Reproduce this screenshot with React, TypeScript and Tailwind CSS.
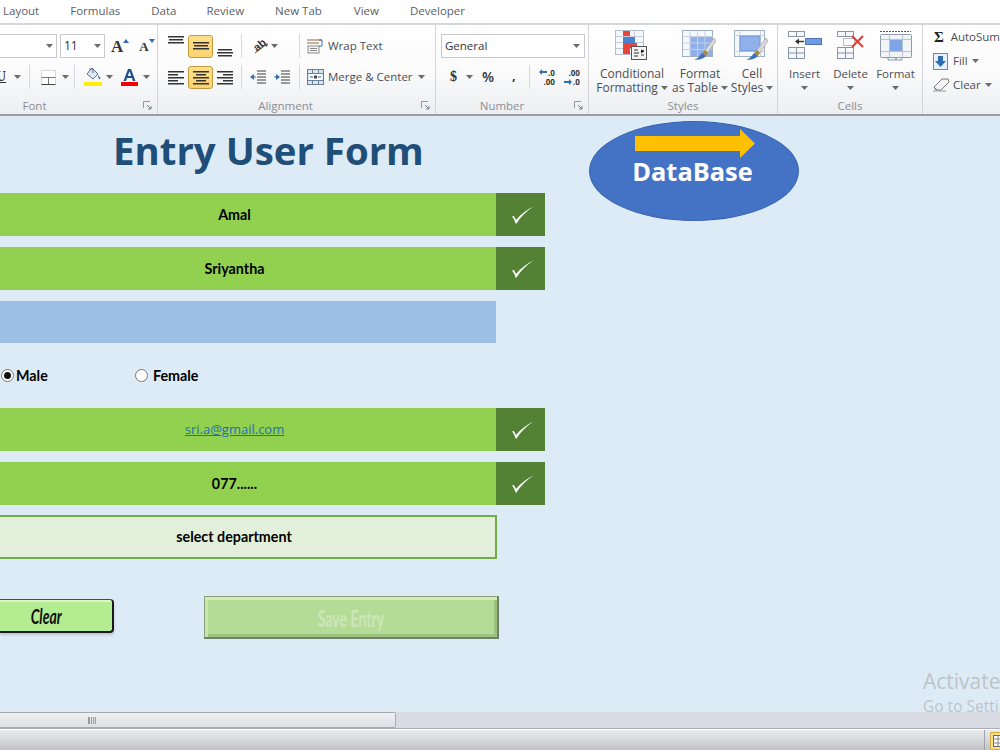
import React from 'react';

const Caret = ({ className = '' }: { className?: string }) => (
  <svg width="7" height="4" viewBox="0 0 7 4" className={className}>
    <path d="M0 0h7L3.5 4z" fill="#6b6b6b" />
  </svg>
);

const Divider = ({ className = '' }: { className?: string }) => (
  <div className={`w-px h-[24px] bg-[#d8dade] ${className}`} />
);

// horizontal lines for the alignment buttons
const Lines = ({ rows, w = 16 }: { rows: [number, number][]; w?: number }) => (
  <svg width={w} height="16" viewBox={`0 0 ${w} 16`}>
    {rows.map(([y, len], i) => {
      const x = (w - len) / 2;
      return <rect key={i} x={x} y={y} width={len} height="1.5" fill="#333" />;
    })}
  </svg>
);

const LinesLeft = ({ rows }: { rows: [number, number, number][] }) => (
  <svg width="16" height="16" viewBox="0 0 16 16">
    {rows.map(([x, y, len], i) => (
      <rect key={i} x={x} y={y} width={len} height="1.5" fill="#333" />
    ))}
  </svg>
);

const Active = ({ children }: { children: React.ReactNode }) => (
  <div className="w-[25px] h-[23px] flex items-center justify-center rounded-[3px] border border-[#c49a3e] bg-gradient-to-b from-[#fde08a] to-[#fbd36f]">
    {children}
  </div>
);

const Group = ({ label, width, labelPad = '', launcher, children }: { label: string; width: string; labelPad?: string; launcher?: boolean; children: React.ReactNode }) => (
  <div className={`${width} h-full shrink-0 flex flex-col border-r border-[#d3d5d9] relative`}>
    <div className="flex-1 min-h-0">{children}</div>
    <div className={`h-[18px] pt-[2px] flex items-center justify-center text-[11.5px] text-[#8a8f96] leading-none ${labelPad}`}>{label}</div>
    {launcher && (
      <svg width="9" height="9" viewBox="0 0 9 9" className="absolute right-[5px] bottom-[4px]">
        <path d="M.5 7V.5H7" fill="none" stroke="#9a9a9a" />
        <path d="M4 4l4 4M8 5v3H5" fill="none" stroke="#6f7f90" />
      </svg>
    )}
  </div>
);

const FontGroup = () => (
  <Group label="Font" width="w-[158px]" labelPad="pr-[88px]" launcher>
    <div className="flex items-center h-[24px] mt-[9px]">
      <div className="w-[57px] h-[24px] bg-white border border-l-0 border-[#c8cacd] flex items-center justify-end pr-[3px]">
        <Caret />
      </div>
      <div className="w-[45px] h-[24px] ml-[3px] bg-white border border-[#c8cacd] flex items-center justify-between px-[3px] text-[12px] text-[#333]">
        <span>11</span>
        <Caret />
      </div>
      <span className="ml-[6px] text-[17px] font-bold text-[#333] leading-none font-['Liberation_Serif',serif]">A</span>
      <svg width="6" height="4" viewBox="0 0 6 4" className="mb-[10px]"><path d="M0 4l3-4 3 4z" fill="#2f6db5" /></svg>
      <span className="ml-[10px] text-[13px] font-bold text-[#333] leading-none font-['Liberation_Serif',serif]">A</span>
      <svg width="6" height="4" viewBox="0 0 6 4" className="mb-[10px]"><path d="M0 0l3 4 3-4z" fill="#2f6db5" /></svg>
    </div>
    <div className="flex items-center h-[24px] mt-[7px]">
      <span className="ml-[-4px] w-[10px] text-[14px] font-bold underline text-[#333] leading-none overflow-hidden font-['Liberation_Serif',serif]">U</span>
      <Caret className="ml-[8px]" />
      <Divider className="ml-[8px]" />
      <svg width="15" height="15" viewBox="0 0 15 15" className="ml-[11px]">
        <rect x=".5" y=".5" width="14" height="14" fill="#fff" stroke="#b5b5b5" strokeDasharray="1 1" />
        <path d="M.5 7.500h14M7.500 7.500v7" stroke="#777" />
        <path d="M.5 14.500h14" stroke="#444" />
      </svg>
      <Caret className="ml-[6px]" />
      <Divider className="ml-[5px]" />
      <svg width="18" height="20" viewBox="0 0 18 20" className="ml-[9px]">
        <path d="M8 1l6 6-5 5-6-5z" fill="#dfe7f2" stroke="#5a6f8c" />
        <path d="M14 8c2 2 3 3 2 4s-2-1-2-4z" fill="#4a7ebb" />
        <path d="M5 2h4v4" fill="none" stroke="#5a6f8c" />
        <rect x="0" y="15" width="18" height="4" fill="#ffee00" />
      </svg>
      <Caret className="ml-[4px]" />
      <svg width="17" height="20" viewBox="0 0 17 20" className="ml-[8px]">
        <path d="M2.500 14L7 2h3l4.500 12h-2.600l-1-3H6l-1 3zM6.800 9h3.400L8.500 4.200z" fill="#1f4e8c" />
        <rect x="0" y="15" width="17" height="4" fill="#f00000" />
      </svg>
      <Caret className="ml-[5px]" />
    </div>
  </Group>
);

const WrapIcon = () => (
  <svg width="17" height="16" viewBox="0 0 17 16">
    <path d="M0 2h15M0 5h12" stroke="#8c6a3c" strokeWidth="1.2" />
    <path d="M12 2h3v6h-3" fill="none" stroke="#3c6ea8" />
    <rect x="1" y="8" width="11" height="7" fill="#f4f4f4" stroke="#8a8a8a" />
    <path d="M3 10.500h7M3 12.500h7" stroke="#8a8a8a" />
  </svg>
);

const MergeIcon = () => (
  <svg width="17" height="16" viewBox="0 0 17 16">
    <rect x=".5" y=".5" width="16" height="15" fill="#dbe6f3" stroke="#6d7f95" />
    <path d="M.5 4.500h16M.5 11.500h16M5.500 .5v4M11.500 .5v4M5.500 11.500v4M11.500 11.500v4" stroke="#6d7f95" />
    <rect x="2" y="5" width="13" height="6" fill="#fff" />
    <path d="M3 8h3M14 8h-3" stroke="#2d5f98" strokeWidth="1.2" />
    <path d="M7 6.500h3v3H7z" fill="#444" />
  </svg>
);

const OrientIcon = () => (
  <svg width="20" height="18" viewBox="0 0 20 18">
    <text x="2" y="12" transform="rotate(-40 8 8)" fontSize="11" fontWeight="700" fill="#333" fontFamily="Liberation Sans, sans-serif">ab</text>
    <path d="M4 16L16 7" stroke="#555" />
    <path d="M17 6l-1 4-3-2z" fill="#555" />
  </svg>
);

const AlignmentGroup = () => (
  <Group label="Alignment" width="w-[278px]" labelPad="pr-[22px]" launcher>
    <div className="flex items-center h-[24px] mt-[9px] pl-[10px]">
      <div className="w-[16px] h-[23px] flex items-start pt-[1px]"><Lines rows={[[0, 16], [3, 14], [6, 16]]} /></div>
      <div className="ml-[4px]"><Active><Lines rows={[[4, 16], [7, 14], [10, 16]]} /></Active></div>
      <div className="ml-[4px] w-[16px] h-[23px] flex items-end"><Lines rows={[[7, 14], [10, 16], [13, 14]]} /></div>
      <Divider className="ml-[8px]" />
      <div className="ml-[9px]"><OrientIcon /></div>
      <Caret />
      <Divider className="ml-[21px]" />
      <div className="ml-[7px]"><WrapIcon /></div>
      <span className="ml-[4px] text-[11.5px] text-[#4b4f55] leading-none whitespace-nowrap">Wrap Text</span>
    </div>
    <div className="flex items-center h-[24px] mt-[7px] pl-[10px]">
      <div className="w-[16px]"><LinesLeft rows={[[0, 2, 16], [0, 5, 10], [0, 8, 16], [0, 11, 10], [0, 14, 16]]} /></div>
      <div className="ml-[4px]"><Active><Lines rows={[[2, 16], [5, 10], [8, 16], [11, 10], [14, 16]]} /></Active></div>
      <div className="ml-[4px] w-[16px]"><LinesLeft rows={[[0, 2, 16], [6, 5, 10], [0, 8, 16], [6, 11, 10], [0, 14, 16]]} /></div>
      <Divider className="ml-[8px]" />
      <svg width="16" height="14" viewBox="0 0 16 14" className="ml-[8px]">
        <path d="M7 1h9M7 4h9M7 7h9M7 10h9M7 13h9" stroke="#3d3d3d" />
        <path d="M0 7l4-3v6z" fill="#2f6db5" /><path d="M4 7h2" stroke="#2f6db5" />
      </svg>
      <svg width="16" height="14" viewBox="0 0 16 14" className="ml-[8px]">
        <path d="M7 1h9M7 4h9M7 7h9M7 10h9M7 13h9" stroke="#3d3d3d" />
        <path d="M6 7L2 4v6z" fill="#2f6db5" /><path d="M0 7h2" stroke="#2f6db5" />
      </svg>
      <Divider className="ml-[9px]" />
      <div className="ml-[7px]"><MergeIcon /></div>
      <span className="ml-[4px] text-[11.5px] text-[#4b4f55] leading-none whitespace-nowrap">Merge &amp; Center</span>
      <Caret className="ml-[5px]" />
    </div>
  </Group>
);

const NumberGroup = () => (
  <Group label="Number" width="w-[153px]" labelPad="pr-[20px]" launcher>
    <div className="ml-[5px] mt-[9px] w-[144px] h-[24px] bg-white border border-[#c8cacd] flex items-center justify-between pl-[3px] pr-[4px] text-[11.5px] text-[#333]">
      <span>General</span>
      <Caret />
    </div>
    <div className="flex items-center h-[24px] mt-[7px] pl-[14px] text-[#333]">
      <span className="text-[14px] font-bold leading-none font-['Liberation_Serif',serif]">$</span>
      <Caret className="ml-[9px]" />
      <span className="ml-[9px] text-[14px] font-semibold leading-none">%</span>
      <span className="ml-[18px] text-[13px] font-bold leading-none mb-[4px]">,</span>
      <Divider className="ml-[13px]" />
      <div className="ml-[9px] relative w-[16px] h-[18px] text-[8px] font-bold leading-[9px] text-right">
        <div>.0</div><div>.00</div>
        <svg width="8" height="6" viewBox="0 0 8 6" className="absolute left-0 top-[1px]"><path d="M0 3l3-3v2h5v2H3v2z" fill="#2f6db5" /></svg>
      </div>
      <div className="ml-[9px] relative w-[16px] h-[18px] text-[8px] font-bold leading-[9px] text-right">
        <div>.00</div><div>.0</div>
        <svg width="8" height="6" viewBox="0 0 8 6" className="absolute left-0 bottom-[1px]"><path d="M8 3L5 0v2H0v2h5v2z" fill="#2f6db5" /></svg>
      </div>
    </div>
  </Group>
);

const CondIcon = () => (
  <svg width="32" height="30" viewBox="0 0 32 30">
    <rect x=".5" y=".5" width="28" height="24" fill="#f5f8fc" stroke="#b4bfcc" />
    <path d="M.5 6.500h28M.5 12.500h28M.5 18.500h28M8.500 .5v24M19.500 .5v24" stroke="#c3ccd8" />
    <rect x="8" y="1" width="7" height="5" fill="#e8443a" />
    <rect x="8" y="7" width="12" height="6" fill="#4d82d0" />
    <rect x="8" y="13" width="14" height="5" fill="#e8443a" />
    <rect x="8" y="18" width="7" height="6" fill="#e8443a" />
    <rect x="16.500" y="16.500" width="15" height="13" fill="#f3f3f3" stroke="#555" />
    <path d="M19 20h4M19 23h5M19 26h4M26 20l3 1-3 2M26 25h3" stroke="#333" />
  </svg>
);

const Brush = () => (
  <g>
    <path d="M32 8L23 20l3 3 8-12z" fill="#d9d9d9" stroke="#9a9a9a" strokeWidth=".6" />
    <path d="M23 20l3 3-2 3-4-3z" fill="#a78a3f" />
    <path d="M20 23l4 3c-3 3-8 4-12 4 3-1 6-4 8-7z" fill="#3b6fc0" />
  </g>
);

const TableIcon = () => (
  <svg width="34" height="31" viewBox="0 0 34 31">
    <rect x=".5" y=".5" width="30" height="26" fill="#f5f8fc" stroke="#9fb0c5" />
    <rect x="8" y="6" width="22" height="20" fill="#8fb0ea" />
    <path d="M.5 6.500h30M.5 13h30M.5 19.500h30M8 .5v26M15.500 .5v26M23 .5v26" stroke="#c6d2e2" />
    <Brush />
  </svg>
);

const CellStyleIcon = () => (
  <svg width="34" height="31" viewBox="0 0 34 31">
    <rect x=".5" y=".5" width="30" height="26" fill="#f5f8fc" stroke="#9fb0c5" />
    <path d="M.5 5.500h30M.5 21.500h30M5.500 .5v26M26.500 .5v26" stroke="#c6d2e2" />
    <rect x="6" y="6" width="20" height="15" fill="#8fb0ea" stroke="#5b86c9" strokeWidth=".6" />
    <Brush />
  </svg>
);

const BigLabel = ({ top, bottom }: { top: string; bottom: string }) => (
  <div className="text-[12px] leading-[14px] text-[#4b4f55] text-center whitespace-nowrap mt-[6px]">
    <div>{top}</div>
    <div className="flex items-center justify-center gap-[3px]">{bottom}<Caret /></div>
  </div>
);

const StylesGroup = () => (
  <Group label="Styles" width="w-[189px]">
    <div className="flex items-start pt-[5px] pl-[5px]">
      <div className="w-[76px] flex flex-col items-center"><div className="h-[31px] mr-[3px]"><CondIcon /></div><BigLabel top="Conditional" bottom="Formatting" /></div>
      <div className="w-[60px] flex flex-col items-center"><div className="h-[31px] mr-[3px]"><TableIcon /></div><BigLabel top="Format" bottom="as Table" /></div>
      <div className="w-[44px] flex flex-col items-center"><div className="h-[31px] mr-[3px]"><CellStyleIcon /></div><BigLabel top="Cell" bottom="Styles" /></div>
    </div>
  </Group>
);

const InsertIcon = () => (
  <svg width="34" height="30" viewBox="0 0 34 30">
    <g fill="#f6f8fb" stroke="#8695a8">
      <rect x=".5" y="1.500" width="16" height="5" />
      <path d="M8.500 1.500v5" />
      <rect x=".5" y="17.500" width="16" height="11" />
      <path d="M.5 23h16M8.500 17.500v11" />
    </g>
    <rect x="17.500" y="8.500" width="16" height="6" fill="#6f9be0" stroke="#4d75b3" />
    <path d="M8 11.500h8" stroke="#333" strokeWidth="1.4" />
    <path d="M7 11.500l4-3v6z" fill="#333" />
  </svg>
);

const DeleteIcon = () => (
  <svg width="28" height="30" viewBox="0 0 28 30">
    <g fill="#f6f8fb" stroke="#8695a8">
      <rect x=".5" y="1.500" width="16" height="5" />
      <path d="M8.500 1.500v5" />
      <rect x=".5" y="17.500" width="16" height="11" />
      <path d="M.5 23h16M8.500 17.500v11" />
    </g>
    <rect x="6.500" y="8.500" width="11" height="7" fill="#fff" stroke="#777" strokeDasharray="1 1" />
    <path d="M15 6l11 11M26 6L15 17" stroke="#e8382c" strokeWidth="2" />
  </svg>
);

const FormatIcon = () => (
  <svg width="34" height="32" viewBox="0 0 34 32">
    <path d="M1 1.500h31" stroke="#555" strokeDasharray="2 1" />
    <rect x="1.500" y="4.500" width="31" height="23" rx="1" fill="#f1f4f8" stroke="#8e9aaa" />
    <path d="M1.500 9.500h31M1.500 21.500h31M10.500 4.500v23M23.500 4.500v23" stroke="#b9c3cf" />
    <rect x="11" y="10" width="12" height="11" fill="#7ea3e6" />
    <path d="M9 28v2h8v-2M17 28v2h6v-2" fill="#f1f4f8" stroke="#8e9aaa" />
  </svg>
);

const CellsGroup = () => (
  <Group label="Cells" width="w-[145px]">
    <div className="flex items-start pt-[5px] pl-[3px]">
      {[
        { name: 'Insert', icon: <InsertIcon />, w: 'w-[47px]' },
        { name: 'Delete', icon: <DeleteIcon />, w: 'w-[45px]' },
        { name: 'Format', icon: <FormatIcon />, w: 'w-[45px]' },
      ].map((c) => (
        <div key={c.name} className={`${c.w} flex flex-col items-center`}>
          <div className="h-[31px]">{c.icon}</div>
          <div className="mt-[6px] text-[11.5px] leading-[14px] text-[#4b4f55]">{c.name}</div>
          <Caret className="mt-[5px]" />
        </div>
      ))}
    </div>
  </Group>
);

const EditingGroup = () => (
  <div className="flex-1 h-full pl-[10px] text-[11.5px] text-[#4b4f55] overflow-hidden">
    <div className="h-[24px] flex items-center whitespace-nowrap">
      <span className="w-[21px] pl-[1px] text-[15px] font-bold text-[#222] leading-none font-['Liberation_Serif',serif]">Σ</span>
      <span>AutoSum</span>
    </div>
    <div className="h-[24px] flex items-center">
      <svg width="15" height="17" viewBox="0 0 15 17" className="mr-[5px]">
        <rect x=".5" y=".5" width="14" height="16" fill="#e8f0fa" stroke="#6d88ac" />
        <path d="M5 3h5v5h3l-5.500 6L2 8h3z" fill="#2f6db5" />
      </svg>
      <span>Fill</span>
      <Caret className="ml-[4px]" />
    </div>
    <div className="h-[24px] flex items-center">
      <svg width="17" height="14" viewBox="0 0 17 14" className="mr-[3px]">
        <path d="M1 9L9 1h6l1 3-8 8H3z" fill="#f4f4f4" stroke="#777" />
        <path d="M1 9l3 3" stroke="#777" />
        <path d="M0 13h13" stroke="#999" />
      </svg>
      <span>Clear</span>
      <Caret className="ml-[4px]" />
    </div>
  </div>
);

const Ribbon = () => (
  <div className="font-['Open_Sans',sans-serif]">
    <div className="h-[23px] pb-[1px] bg-white flex items-center text-[11.5px] text-[#5a6068]">
      <span className="ml-[3px]">Layout</span>
      <span className="ml-[31px]">Formulas</span>
      <span className="ml-[31px]">Data</span>
      <span className="ml-[30px]">Review</span>
      <span className="ml-[31px]">New Tab</span>
      <span className="ml-[32px]">View</span>
      <span className="ml-[31px]">Developer</span>
    </div>
    <div className="h-[93px] flex border-t-2 border-b-2 border-t-[#d5d7db] border-b-[#9b9ea3] bg-gradient-to-b from-white via-[#fbfbfc] to-[#eceef1]">
      <FontGroup />
      <AlignmentGroup />
      <NumberGroup />
      <StylesGroup />
      <CellsGroup />
      <EditingGroup />
    </div>
  </div>
);

const Check = () => (
  <svg width="23" height="18" viewBox="0 0 23 18" className="ml-[3px]">
    <path d="M1 10.500L2.500 10C3.500 11 4.500 12.500 5 14 10 8 16 3.500 22.500 .5 15 5.500 9.500 11 5.500 17.500H4.500C4 15 2.500 12.500 1 10.500z" fill="#fff" />
  </svg>
);

const FieldRow = ({ children }: { children?: React.ReactNode }) => (
  <div className="flex h-[43px] w-[545px]">
    <div className="w-[496px] pr-[27px] bg-[#92d050] flex items-center justify-center text-[14.3px] font-bold text-black">{children}</div>
    <div className="w-[49px] bg-[#548235] flex items-center justify-center"><Check /></div>
  </div>
);

const Radio = ({ checked, label, gap }: { checked?: boolean; label: string; gap: string }) => (
  <div className={`flex items-center ${gap} text-[14.3px] font-bold text-black`}>
    <div className="w-[13px] h-[13px] rounded-full bg-white border border-[#777] flex items-center justify-center">
      {checked && <div className="w-[7px] h-[7px] rounded-full bg-[#111]" />}
    </div>
    <span>{label}</span>
  </div>
);

const Sheet = () => (
  <div className="relative flex-1 min-h-0 bg-[#ddebf7] flex items-start overflow-hidden font-['Lato',sans-serif]">
    <div className="w-[545px] shrink-0">
      <h1 className="h-[77px] pl-[113px] pt-[8px] text-[38.4px] leading-[52px] font-bold text-[#1f4e79] whitespace-nowrap font-['Open_Sans',sans-serif]">Entry User Form</h1>
      <FieldRow>Amal</FieldRow>
      <div className="mt-[11px]"><FieldRow>Sriyantha</FieldRow></div>
      <div className="mt-[11px] w-[496px] h-[42px] bg-[#9bbfe5]" />
      <div className="h-[65px] flex items-center pl-[1px]">
        <div className="w-[134px]"><Radio checked label="Male" gap="gap-[2px]" /></div>
        <Radio label="Female" gap="gap-[5px]" />
      </div>
      <FieldRow>
        <span className="pt-[1px] font-normal text-[13px] text-[#1f6fb5] underline font-['Open_Sans',sans-serif]">sri.a@gmail.com</span>
      </FieldRow>
      <div className="mt-[11px]"><FieldRow>077......</FieldRow></div>
      <div className="mt-[10px] w-[497px] h-[44px] pr-[27px] pb-[1px] bg-[#e2efda] border-2 border-l-0 border-[#70ad47] flex items-center justify-center text-[14.3px] font-bold text-black">select department</div>
      <div className="mt-[37px] flex items-start">
        <div className="mt-[3px] w-[114px] h-[34px] rounded-r-[4px] bg-[#b4ec92] border-t border-t-[#4a4a4a] border-r-2 border-b-2 border-r-[#1a1a1a] border-b-[#1a1a1a] shadow-[inset_0_2px_1px_#d8f7c3,0_2px_3px_#b8c4cc] flex items-center justify-center pr-[20px]">
          <span className="inline-block text-[20px] leading-none font-bold italic text-[#111] scale-x-[0.7]">Clear</span>
        </div>
        <div className="ml-[90px] w-[295px] h-[43px] pt-[4px] bg-[#b5dc97] border border-[#8b9c80] border-r-2 border-b-2 border-r-[#6f7f68] border-b-[#6f7f68] shadow-[inset_0_3px_0_#d0f0b2,inset_3px_0_0_#c6e8a8,inset_-3px_0_0_#9cc280,inset_0_-3px_0_#9cc280] flex items-center justify-center pr-[1px]">
          <span className="inline-block text-[22px] leading-none font-bold text-[#cde6ba] scale-x-[0.64]">Save Entry</span>
        </div>
      </div>
    </div>
    <div className="ml-[44px] mt-[5px] w-[210px] h-[100px] rounded-[50%] bg-[#4472c4] border border-[#3b64ae] flex flex-col items-center">
      <svg width="120" height="29" viewBox="0 0 120 29" className="mt-[7px] ml-[2px]">
        <path d="M0 7h105V0l15 14.500L105 29v-7H0z" fill="#ffc000" />
      </svg>
      <span className="text-[25.4px] leading-[30px] font-bold text-white mt-[-2px] mr-[3px] font-['Open_Sans',sans-serif]">DataBase</span>
    </div>
    <div className="absolute left-[923px] top-[555px] text-[#bfc3c7] leading-none whitespace-nowrap font-['Open_Sans',sans-serif]">
      <div className="text-[21px]">Activate Windows</div>
      <div className="text-[15.5px] mt-[7px]">Go to Settings</div>
    </div>
  </div>
);

const Bottom = () => (
  <>
    <div className="h-[17px] bg-[#d9dbe2] border-b border-b-[#a9acb2]">
      <div className="w-[396px] h-[16px] border border-l-0 border-[#a7abb2] rounded-r-[2px] bg-gradient-to-b from-[#eff0f3] to-[#dddfe4] flex items-center justify-center pr-[211px]">
        <div className="w-[8px] h-[7px] border-x border-[#999] bg-[repeating-linear-gradient(90deg,#999_0,#999_1px,transparent_1px,transparent_2px)]" />
      </div>
    </div>
    <div className="h-[21px] border-t border-t-white bg-gradient-to-b from-[#eaebed] to-[#c1c4c8] flex justify-end">
      <div className="w-px h-full bg-[#a0a3a8] mr-[5px]" />
      <div className="w-[10px] h-[18px] mt-[2px] border border-r-0 border-[#d9a93e] bg-[#fbe08c] rounded-l-[2px] pl-[2px] pt-[2px]">
        <svg width="8" height="12" viewBox="0 0 8 12">
          <rect x=".5" y=".5" width="12" height="11" fill="#fff" stroke="#666" />
          <path d="M.5 4h8M.5 8h8M5 .5v11" stroke="#888" />
        </svg>
      </div>
    </div>
  </>
);

export default function App() {
  return (
    <div className="w-[1000px] h-[750px] flex flex-col overflow-hidden bg-white">
      <Ribbon />
      <Sheet />
      <Bottom />
    </div>
  );
}
